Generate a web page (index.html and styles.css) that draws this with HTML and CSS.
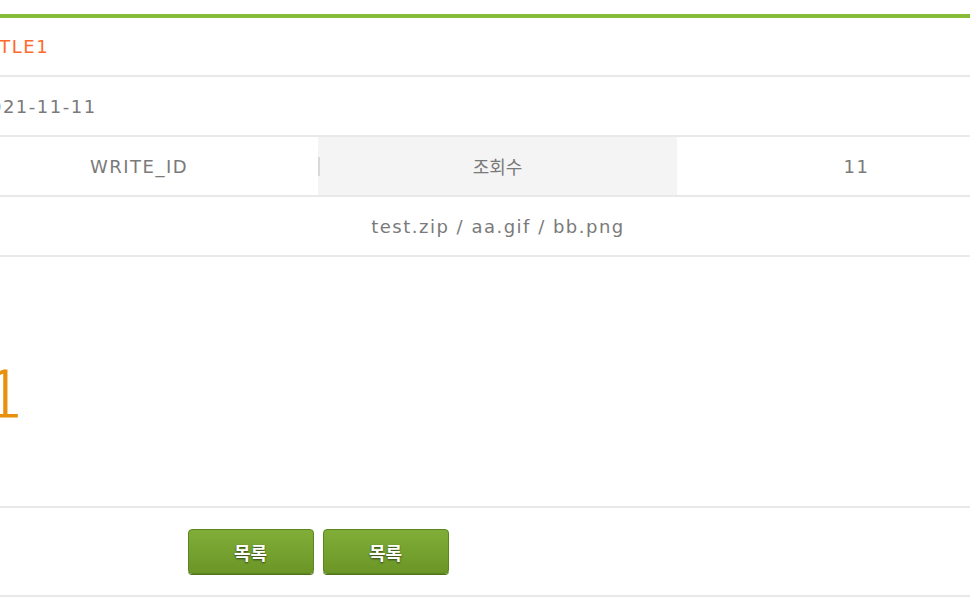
FILE: index.html
```html
<!DOCTYPE html>
<html lang="ko">
<head>
<meta charset="utf-8">
<title>게시글 보기</title>
<link rel="stylesheet" href="styles.css">
</head>
<body>
<div class="page">
  <div class="view">
    <div class="row">
      <div class="cell th">제목</div>
      <div class="cell td title span3">TITLE1</div>
    </div>
    <div class="row">
      <div class="cell th">작성일</div>
      <div class="cell td date span3">2021-11-11</div>
    </div>
    <div class="row">
      <div class="cell th">작성자</div>
      <div class="cell td center">WRITE_ID</div>
      <div class="cell th divided">조회수</div>
      <div class="cell td center">11</div>
    </div>
    <div class="row">
      <div class="cell th">첨부파일</div>
      <div class="cell td center span3">test.zip / aa.gif / bb.png</div>
    </div>
    <div class="row">
      <div class="cell th content-th">내용</div>
      <div class="cell td content span3"><span class="content-text">1</span></div>
    </div>
    <div class="row buttons">
      <a class="btn" href="#">목록</a>
      <a class="btn" href="#">목록</a>
    </div>
  </div>
</div>
</body>
</html>
```
FILE: styles.css
```css
html, body {
  margin: 0;
  padding: 0;
  background: #fff;
  overflow: hidden;
}

.page {
  margin: 14px 0 0 -400px;
  width: 1436px;
}

.view {
  border-top: 4px solid #86bc36;
  font-family: "DejaVu Sans", "Noto Sans CJK KR", sans-serif;
  font-size: 18px;
  color: #7a7a7a;
  letter-spacing: 1.5px;
}

.row {
  display: grid;
  grid-template-columns: 360px 358px 359px 359px;
  border-bottom: 2px solid #e9e9e9;
}

.row .cell {
  box-sizing: border-box;
  height: 58px;
  display: flex;
  align-items: center;
  padding: 0 20px;
  min-width: 0;
}

.view .row:first-child .cell {
  height: 57px;
}

.th {
  background: #f4f4f4;
  justify-content: center;
  font-family: "Noto Sans CJK KR", sans-serif;
  letter-spacing: 0;
}

.divided {
  background: linear-gradient(#d9d9d9, #d9d9d9) left center / 2px 19px no-repeat, #f4f4f4;
}

.span3 {
  grid-column: span 3;
}

.center {
  justify-content: center;
}

.title {
  color: #ff6a2c;
}

.date {
  padding-left: 17px !important;
}

.row .content-th,
.row .content {
  height: 249px;
}

.row .content {
  align-items: flex-start;
  padding-top: 106px;
  padding-left: 24px;
}

.content-text {
  font-family: "DejaVu Sans", sans-serif;
  font-weight: 200;
  font-size: 64px;
  line-height: 1;
  color: #e8900c;
  -webkit-text-stroke: 1px #e8900c;
  letter-spacing: 0;
}

.buttons {
  display: flex;
  justify-content: center;
  gap: 9px;
  padding: 21px 0;
}

.btn {
  width: 126px;
  height: 45px;
  box-sizing: border-box;
  display: flex;
  align-items: center;
  justify-content: center;
  border: 1px solid #5a8520;
  border-radius: 4px;
  background: linear-gradient(#80ae38, #6b9627);
  color: #fff;
  font-family: "Noto Sans CJK KR", sans-serif;
  font-weight: bold;
  font-size: 18px;
  letter-spacing: 0;
  text-decoration: none;
  text-shadow: 0 1px 2px rgba(0, 0, 0, 0.6);
  box-shadow: 0 1px 0 #4f7518;
}
```
